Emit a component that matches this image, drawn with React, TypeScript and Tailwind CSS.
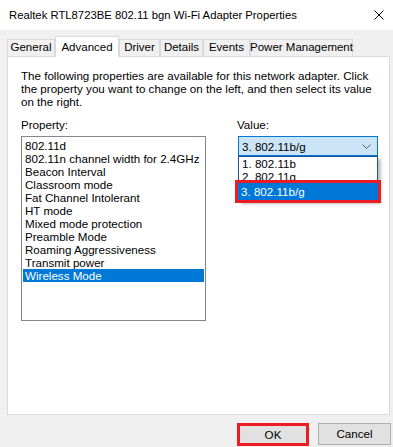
import React from "react";

const font = { fontFamily: '"Liberation Sans", Arial, sans-serif' };

function Tab({ label, w, active }: { label: string; w: string; active?: boolean }) {
  if (active) {
    return (
      <div
        className={`${w} h-[21px] -mb-px relative z-10 bg-white border border-b-0 border-[#d9d9d9] flex items-start justify-center pt-[2px] text-[11.5px] text-black whitespace-nowrap`}
      >
        {label}
      </div>
    );
  }
  return (
    <div
      className={`${w} h-[17px] bg-[#f0f0f0] border border-b-0 border-[#d9d9d9] flex items-center justify-center text-[11.5px] text-black whitespace-nowrap`}
    >
      {label}
    </div>
  );
}

const props = [
  "802.11d",
  "802.11n channel width for 2.4GHz",
  "Beacon Interval",
  "Classroom mode",
  "Fat Channel Intolerant",
  "HT mode",
  "Mixed mode protection",
  "Preamble Mode",
  "Roaming Aggressiveness",
  "Transmit power",
  "Wireless Mode",
];

export default function App() {
  return (
    <div className="w-[393px] h-[447px] bg-[#f0f0f0] flex flex-col overflow-hidden text-black" style={font}>
      {/* title bar */}
      <div className="h-[30px] bg-white flex items-center justify-between pl-[9px] pr-[5px] shrink-0">
        <span className="text-[11.3px] leading-[13px] whitespace-nowrap">Realtek RTL8723BE 802.11 bgn Wi-Fi Adapter Properties</span>
        <svg width="10" height="10" viewBox="0 0 10 10" className="mr-[4px]">
          <path d="M0.5 0.5 L9.5 9.5 M9.5 0.5 L0.5 9.5" stroke="#000" strokeWidth="1" />
        </svg>
      </div>

      {/* tabs */}
      <div className="flex items-end pl-[7px] pt-[6px] shrink-0">
        <Tab label="General" w="w-[48px]" />
        <Tab label="Advanced" w="w-[64px]" active />
        <Tab label="Driver" w="w-[41px]" />
        <Tab label="Details" w="w-[43px]" />
        <Tab label="Events" w="w-[47px]" />
        <Tab label="Power Management" w="w-[103px]" />
      </div>

      {/* panel */}
      <div className="ml-[7px] w-[383px] h-[359px] bg-white border border-[#d9d9d9] shrink-0 pl-[13px] pt-[12px] text-[11.6px] leading-[13px]">
        <div className="whitespace-nowrap">
          The following properties are available for this network adapter. Click
          <br />
          the property you want to change on the left, and then select its value
          <br />
          on the right.
        </div>

        <div className="flex mt-[10px] gap-[32px]">
          {/* left column */}
          <div className="w-[185px] flex flex-col">
            <div className="h-[13px]">Property:</div>
            <div className="mt-[5px] h-[185px] border border-[#828790] px-px pt-[2px]">
              {props.map((p) => (
                <div
                  key={p}
                  className={`h-[13px] pl-[2px] whitespace-nowrap ${
                    p === "Wireless Mode" ? "bg-[#0078d7] text-white" : ""
                  }`}
                >
                  {p}
                </div>
              ))}
            </div>
          </div>

          {/* right column */}
          <div className="w-[140px] flex flex-col">
            <div className="h-[13px] -ml-px">Value:</div>
            <div className="relative mt-[5px]">
              <div className="h-[20px] border border-[#0078d7] bg-[#cce4f7] flex items-center justify-between pl-[3px] pr-[6px]">
                <span>3. 802.11b/g</span>
                <svg width="9" height="5" viewBox="0 0 9 5">
                  <path d="M0.5 0.5 L4.5 4.5 L8.5 0.5" stroke="#5a5a5a" strokeWidth="1" fill="none" />
                </svg>
              </div>
              <div className="absolute left-0 top-[20px] w-[140px] bg-white border border-[#1d4f91] shadow-[3px_3px_3px_rgba(0,0,0,0.25)] z-20">
                <div className="h-[13px] pl-[3px]">1. 802.11b</div>
                <div className="h-[13px] pl-[3px]">2. 802.11g</div>
                <div className="h-[17px] pl-[3px] bg-[#0078d7] text-white flex items-center outline-[3px] outline-solid outline-[#ed1c24] -mx-px">
                  3. 802.11b/g
                </div>
              </div>
            </div>
          </div>
        </div>
      </div>

      {/* buttons */}
      <div className="flex justify-end items-start mt-[8px] pr-[2px] gap-[9px]">
        <div className="w-[72px] h-[23px] border-[3px] border-[#ed1c24] bg-[#e1e1e1] flex items-center justify-center text-[11.6px]">
          OK
        </div>
        <div className="w-[73px] h-[22px] border border-[#adadad] bg-[#e1e1e1] flex items-center justify-center text-[11.6px]">
          Cancel
        </div>
      </div>
    </div>
  );
}
